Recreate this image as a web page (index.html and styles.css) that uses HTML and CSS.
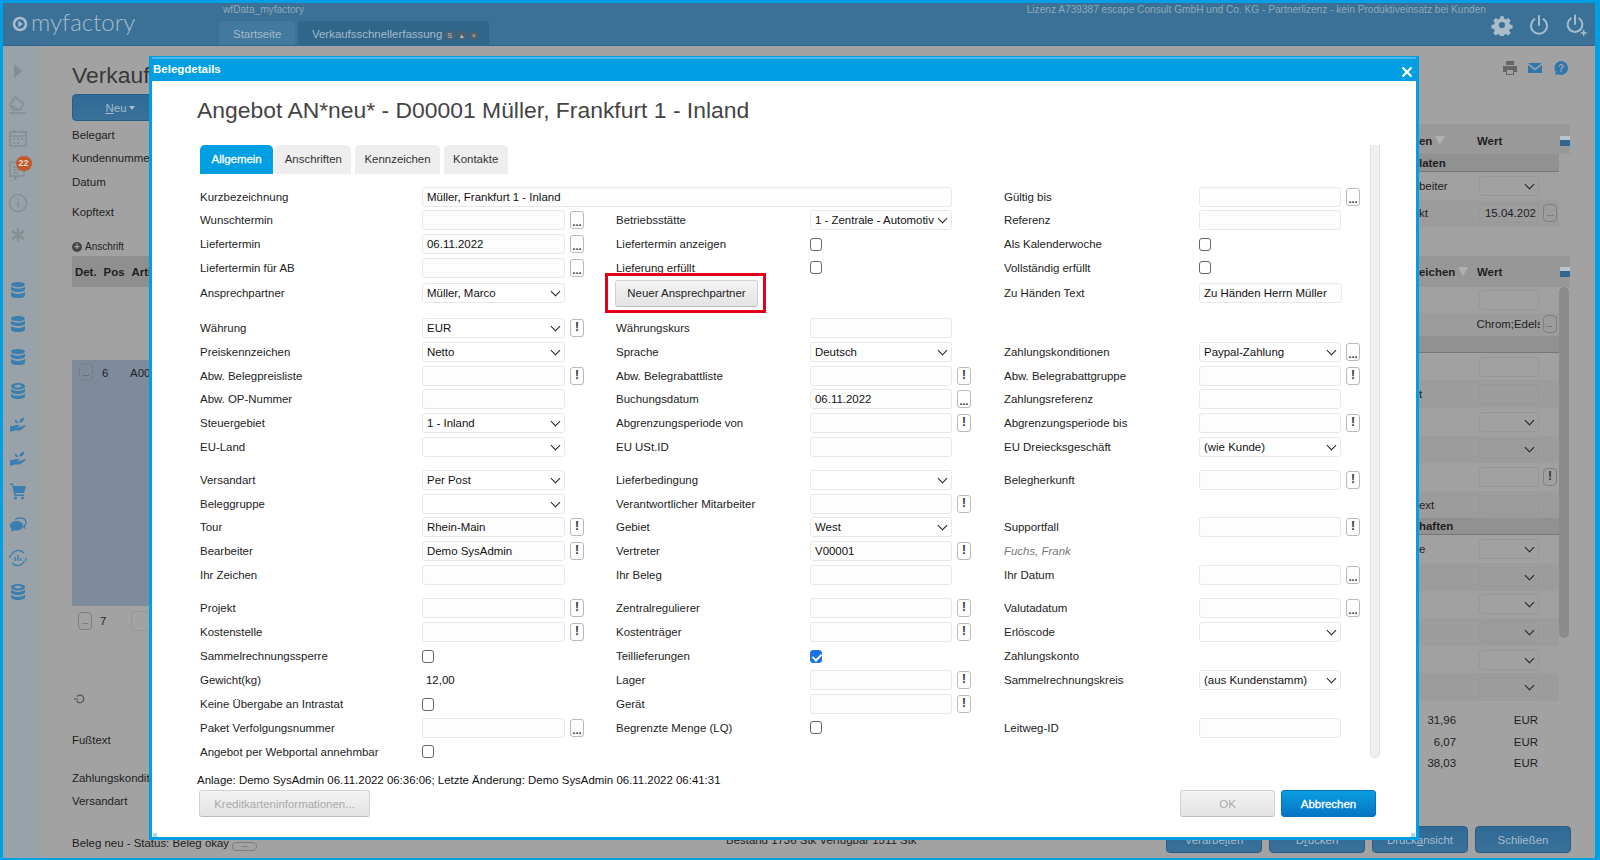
FILE: index.html
```html
<!DOCTYPE html>
<html lang="de">
<head>
    <meta charset="UTF-8">
    <title>myfactory - Belegdetails</title>
    <link rel="stylesheet" href="styles.css">
</head>
<body>
    <svg class="defs" width="0" height="0">
        <symbol id="db" viewBox="0 0 18 18"><path d="M9 1c4 0 7 1 7 2.600S13 6.200 9 6.200 2 5.200 2 3.600 5 1 9 1zM2 5.600c1 1.500 4 2.100 7 2.100s6-.6 7-2.100v3c0 1.500-3 2.500-7 2.500s-7-1-7-2.500zM2 10.800c1 1.500 4 2.100 7 2.100s6-.6 7-2.100v3.600C16 16 13 17 9 17s-7-1-7-2.600z"/></symbol>
        <symbol id="coins" viewBox="0 0 18 18"><path d="M9 1c4 0 7 1.300 7 3.200S13 7.400 9 7.400 2 6.100 2 4.200 5 1 9 1zm0 1.800c-2 0-3.500.6-3.500 1.400S7 5.600 9 5.600s3.500-.6 3.500-1.400S11 2.800 9 2.800zM2 6.600c1 1.600 4 2.300 7 2.300s6-.7 7-2.300v2.600c0 1.500-3 2.700-7 2.700s-7-1.200-7-2.700zM2 11.400c1 1.600 4 2.300 7 2.300s6-.7 7-2.300v2.800C16 15.800 13 17 9 17s-7-1.200-7-2.800z"/></symbol>
        <symbol id="hand" viewBox="0 0 18 18"><path d="M1 11h3l3-1h3c1 0 1 1.600 0 1.600H8v.6h3l4-2c1-.4 2 .7 1 1.500L11 15.500H5L3.500 16.500H1zM9 8.500C7 8 5.500 6.700 5.500 4.500 7.500 4.800 9 6 9 8.500zM10.300 7.800c0-2.800 1.700-4.800 5-5.300 0 3-1.900 5-5 5.300z"/></symbol>
        <symbol id="cart" viewBox="0 0 18 18"><path d="M1 1.500h3l.7 2.500H17l-2 7H6.300l.4 1.500H15V14H5.500L3 3H1z"/><circle cx="6.500" cy="16" r="1.500"/><circle cx="13.500" cy="16" r="1.500"/></symbol>
        <symbol id="chat" viewBox="0 0 18 18"><path d="M7.500 5c3.500 0 6.500 2 6.500 4.800s-3 4.700-6.500 4.700c-.8 0-1.500-.1-2.200-.3L2 16l.9-3C1.700 12.200 1 11.100 1 9.800 1 7 4 5 7.500 5z"/><path d="M6 3.500C7.500 2.300 9.500 2 11 2c3.500 0 6 1.800 6 4.500 0 1.500-.7 2.500-1.800 3.300l.5 2-1.700-1.100" fill="none" stroke="currentColor" stroke-width="1.300"/></symbol>
        <symbol id="chart" viewBox="0 0 18 18"><path d="M2.500 6A7.500 7.500 0 0 1 15 4M15.500 12A7.500 7.500 0 0 1 3 14M1 9a8 8 0 0 1 .5-3M17 9a8 8 0 0 1-.5 3" fill="none" stroke="currentColor" stroke-width="1.400"/><path d="M5.500 8h1.300v4H5.500zM8.300 6h1.300v6H8.300zM11.100 9h1.300v3h-1.300z"/></symbol>
    </svg>

    <div class="screen">
        <header class="topbar">
            <div class="logo">
                <svg class="logo-mark" viewBox="0 0 16 16"><circle cx="8" cy="8" r="6" fill="none" stroke="currentColor" stroke-width="2.600"/><path d="M6.300 4.800 11 8l-4.700 3.200z" fill="currentColor"/></svg>
                <span>myfactory</span>
            </div>
            <div class="topnav">
                <div class="db-name">wfData_myfactory</div>
                <div class="toptabs">
                    <div class="toptab first">Startseite</div>
                    <div class="toptab current">Verkaufsschnellerfassung<span class="tabdots"><span class="tabdot">S</span><span class="tabdot">▴</span><span class="tabdot">×</span></span></div>
                </div>
            </div>
            <div class="licence">Lizenz A739387 escape Consult GmbH und Co. KG - Partnerlizenz - kein Produktiveinsatz bei Kunden</div>
            <div class="topicons">
                <svg viewBox="0 0 22 22"><path fill="currentColor" fill-rule="evenodd" d="M9 1h4l.6 3 1.900.8 2.600-1.700 2.800 2.800-1.700 2.600.8 1.900 3 .6v4l-3 .6-.8 1.900 1.700 2.600-2.800 2.800-2.600-1.700-1.900.8-.6 3H9l-.6-3-1.900-.8-2.600 1.700-2.800-2.800 1.700-2.600-.8-1.900-3-.6v-4l3-.6.8-1.900L1.100 5.900l2.800-2.800 2.600 1.700 1.900-.8zm2 6.500a3.500 3.500 0 1 0 0 7 3.500 3.500 0 0 0 0-7z" transform="translate(1.300 1.300) scale(.88)"/></svg>
                <svg viewBox="0 0 22 22"><path fill="none" stroke="currentColor" stroke-width="2" stroke-linecap="round" d="M11 2v9M6.500 5.200a8 8 0 1 0 9 0"/></svg>
                <svg viewBox="0 0 22 22"><path fill="none" stroke="currentColor" stroke-width="2" stroke-linecap="round" d="M10 1.500v8.500M5.800 4.500a7.400 7.400 0 1 0 8.400 0"/><path fill="currentColor" d="M18 16h1.500v2.200h2.200v1.500h-2.200V22H18v-2.300h-2.200v-1.500H18z"/></svg>
            </div>
        </header>

        <div class="workspace">
            <nav class="sidebar">
                <svg class="nav-arrow" viewBox="0 0 10 14"><path d="M1 0l8 7-8 7z"/></svg>
                <svg class="nav-grey" viewBox="0 0 20 20"><path fill="none" stroke="currentColor" stroke-width="1.600" d="M7 2l9 7-4 6H5L2 10zM2 10l9 5M1 18h18"/></svg>
                <svg class="nav-grey" viewBox="0 0 20 20"><path fill="none" stroke="currentColor" stroke-width="1.600" d="M2 4h16v14H2zM2 8h16M6 1.500V5M14 1.500V5"/><path fill="currentColor" d="M5 10h2v2H5zM9 10h2v2H9zM13 10h2v2h-2zM5 14h2v2H5zM9 14h2v2H9z"/></svg>
                <div class="nav-doc">
                    <svg class="nav-grey" viewBox="0 0 20 20"><path fill="none" stroke="currentColor" stroke-width="1.600" d="M2 2h14v14H9l-2 3v-3H2zM5 7h7M5 10h7M5 13h5"/></svg>
                    <span class="badge">22</span>
                </div>
                <svg class="nav-grey" viewBox="0 0 20 20"><circle cx="10" cy="10" r="8.500" fill="none" stroke="currentColor" stroke-width="1.600"/><path fill="currentColor" d="M9.200 5.500h1.600v1.800H9.200zM9.200 8.800h1.600v6H9.200z"/></svg>
                <svg class="nav-grey nav-last" viewBox="0 0 20 20"><path fill="none" stroke="currentColor" stroke-width="2.200" d="M10 3v14M4 6l12 8M16 6L4 14"/></svg>
                <svg class="nav-blue"><use href="#db"/></svg>
                <svg class="nav-blue"><use href="#db"/></svg>
                <svg class="nav-blue"><use href="#db"/></svg>
                <svg class="nav-blue"><use href="#coins"/></svg>
                <svg class="nav-blue"><use href="#hand"/></svg>
                <svg class="nav-blue"><use href="#hand"/></svg>
                <svg class="nav-blue"><use href="#cart"/></svg>
                <svg class="nav-blue"><use href="#chat"/></svg>
                <svg class="nav-blue"><use href="#chart"/></svg>
                <svg class="nav-blue"><use href="#coins"/></svg>
            </nav>

            <main class="content">
                <div class="panes">
                    <section class="leftpane">
                        <h1 class="page-title">Verkauf</h1>
                        <button class="btn-dark neu" type="button"><u>N</u>eu<span class="caret"></span></button>
                        <div class="bg-label l-belegart">Belegart</div>
                        <div class="bg-label l-kunde">Kundennummer</div>
                        <div class="bg-label l-datum">Datum</div>
                        <div class="bg-label l-kopf">Kopftext</div>
                        <div class="bg-label l-anschrift"><span class="plus">+</span>Anschrift</div>
                        <div class="grid-head"><span>Det.</span><span>Pos</span><span>Artikel</span></div>
                        <div class="grid-sel"><span class="mini-btn">...</span><span class="pos">6</span><span>A0001</span></div>
                        <div class="grid-row"><span class="mini-btn">...</span><span class="pos">7</span><span class="bg-input"></span></div>
                        <svg class="undo" viewBox="0 0 12 12"><path fill="none" stroke="currentColor" stroke-width="1.200" d="M3 3.500a3.800 3.800 0 1 1-.5 4M0 6h4"/></svg>
                        <div class="bg-label l-fuss">Fußtext</div>
                        <div class="bg-label l-zahl">Zahlungskonditionen</div>
                        <div class="bg-label l-vers">Versandart</div>
                    </section>

                    <section class="rightpane">
                        <div class="tools">
                            <svg class="tool-grey" viewBox="0 0 16 16"><path fill="currentColor" d="M4 1h8v4H4zM1 6h14v6h-3v3H4v-3H1zm4 4v4h6v-4z"/></svg>
                            <svg viewBox="0 0 16 16"><path fill="currentColor" d="M1 3h14L8 8.500zM1 5l7 5.500L15 5v8H1z"/></svg>
                            <svg viewBox="0 0 16 16"><path fill="currentColor" d="M8 1a7 7 0 0 1 0 14c-1 0-2-.2-3-.7L2 15l.8-3A7 7 0 0 1 8 1z"/><text x="8" y="11.500" text-anchor="middle" class="tool-q">?</text></svg>
                        </div>

                        <div class="r-head first"><span class="r-name">en<span class="filter"></span></span><b>Wert</b><span class="r-icon"></span></div>
                        <div class="r-band">laten</div>
                        <div class="r-row"><span class="r-name">beiter</span><span class="bg-input sel"></span></div>
                        <div class="r-row alt"><span class="r-name">kt</span><span class="bg-input">15.04.202</span><span class="mini-btn">...</span></div>

                        <div class="r-head second"><span class="r-name">eichen<span class="filter"></span></span><b>Wert</b><span class="r-icon"></span></div>
                        <div class="r-body">
                            <div class="r-rows">
                                <div class="r-row top"><span class="r-name"></span><span class="bg-input"></span></div>
                                <div class="r-row alt short"><span class="r-name"></span><span class="r-value">Chrom;Edels</span><span class="mini-btn">...</span></div>
                                <div class="r-band"></div>
                                <div class="r-row"><span class="r-name"></span><span class="bg-input"></span></div>
                                <div class="r-row alt"><span class="r-name">t</span><span class="bg-input"></span></div>
                                <div class="r-row"><span class="r-name"></span><span class="bg-input sel"></span></div>
                                <div class="r-row alt"><span class="r-name"></span><span class="bg-input sel"></span></div>
                                <div class="r-row"><span class="r-name"></span><span class="bg-input"></span><span class="mini-btn strong">!</span></div>
                                <div class="r-row alt"><span class="r-name">ext</span><span class="bg-input"></span></div>
                                <div class="r-band">haften</div>
                                <div class="r-row"><span class="r-name">e</span><span class="bg-input sel"></span></div>
                                <div class="r-row alt"><span class="r-name"></span><span class="bg-input sel"></span></div>
                                <div class="r-row"><span class="r-name"></span><span class="bg-input sel"></span></div>
                                <div class="r-row alt"><span class="r-name"></span><span class="bg-input sel"></span></div>
                                <div class="r-row"><span class="r-name"></span><span class="bg-input sel"></span></div>
                                <div class="r-row alt"><span class="r-name"></span><span class="bg-input sel"></span></div>
                            </div>
                            <div class="r-scroll"></div>
                        </div>

                        <div class="totals">
                            <span>31,96</span><span>EUR</span>
                            <span>6,07</span><span>EUR</span>
                            <span>38,03</span><span>EUR</span>
                        </div>
                    </section>
                </div>

                <footer class="statusbar">
                    <div class="status">Beleg neu - Status: Beleg okay <span class="mini-btn wide">...</span></div>
                    <div class="stock">Bestand 1736 Stk Verfügbar 1511 Stk</div>
                    <div class="actions">
                        <button class="btn-dark" type="button">Verarbe<u>i</u>ten</button>
                        <button class="btn-dark" type="button">D<u>r</u>ucken</button>
                        <button class="btn-dark" type="button">Druck<u>a</u>nsicht</button>
                        <button class="btn-dark" type="button">Schließen</button>
                    </div>
                </footer>
            </main>
        </div>
    </div>

    <div class="dialog">
        <div class="dialog-bar">
            <span>Belegdetails</span>
            <svg class="dialog-close" viewBox="0 0 12 12"><path d="M1.500 1.500l9 9M10.500 1.500l-9 9" stroke="#fff" stroke-width="2.200"/></svg>
        </div>
        <div class="dialog-body">
            <h2 class="dialog-title">Angebot AN*neu* - D00001 Müller, Frankfurt 1 - Inland</h2>

            <div class="scroll-area">
                <div class="form-wrap">
                    <div class="tabs">
                        <div class="tab active">Allgemein</div>
                        <div class="tab">Anschriften</div>
                        <div class="tab">Kennzeichen</div>
                        <div class="tab">Kontakte</div>
                    </div>

                    <div class="form-group g1">
                        <div class="row">
                            <label>Kurzbezeichnung</label>
                            <div class="cell span3"><div class="fld wide">Müller, Frankfurt 1 - Inland</div></div>
                            <label>Gültig bis</label>
                            <div class="cell"><div class="fld"></div><span class="sq">...</span></div>
                        </div>
                        <div class="row">
                            <label>Wunschtermin</label>
                            <div class="cell"><div class="fld"></div><span class="sq">...</span></div>
                            <label>Betriebsstätte</label>
                            <div class="cell"><div class="fld sel">1 - Zentrale - Automotiv</div></div>
                            <label>Referenz</label>
                            <div class="cell"><div class="fld"></div></div>
                        </div>
                        <div class="row">
                            <label>Liefertermin</label>
                            <div class="cell"><div class="fld">06.11.2022</div><span class="sq">...</span></div>
                            <label>Liefertermin anzeigen</label>
                            <div class="cell"><span class="check"></span></div>
                            <label>Als Kalenderwoche</label>
                            <div class="cell"><span class="check"></span></div>
                        </div>
                        <div class="row">
                            <label>Liefertermin für AB</label>
                            <div class="cell"><div class="fld"></div><span class="sq">...</span></div>
                            <label>Lieferung erfüllt</label>
                            <div class="cell"><span class="check"></span></div>
                            <label>Vollständig erfüllt</label>
                            <div class="cell"><span class="check"></span></div>
                        </div>
                        <div class="row contact">
                            <label>Ansprechpartner</label>
                            <div class="cell"><div class="fld sel">Müller, Marco</div></div>
                            <div class="cell span2">
                                <button class="btn-grey new-contact" type="button">Neuer Ansprechpartner<span class="red-box"></span></button>
                            </div>
                            <label>Zu Händen Text</label>
                            <div class="cell"><div class="fld">Zu Händen Herrn Müller</div></div>
                        </div>
                    </div>

                    <div class="form-group g2">
                        <div class="row">
                            <label>Währung</label>
                            <div class="cell"><div class="fld sel">EUR</div><span class="sq bang">!</span></div>
                            <label>Währungskurs</label>
                            <div class="cell"><div class="fld"></div></div>
                        </div>
                        <div class="row">
                            <label>Preiskennzeichen</label>
                            <div class="cell"><div class="fld sel">Netto</div></div>
                            <label>Sprache</label>
                            <div class="cell"><div class="fld sel">Deutsch</div></div>
                            <label>Zahlungskonditionen</label>
                            <div class="cell"><div class="fld sel">Paypal-Zahlung</div><span class="sq">...</span></div>
                        </div>
                        <div class="row">
                            <label>Abw. Belegpreisliste</label>
                            <div class="cell"><div class="fld"></div><span class="sq bang">!</span></div>
                            <label>Abw. Belegrabattliste</label>
                            <div class="cell"><div class="fld"></div><span class="sq bang">!</span></div>
                            <label>Abw. Belegrabattgruppe</label>
                            <div class="cell"><div class="fld"></div><span class="sq bang">!</span></div>
                        </div>
                        <div class="row">
                            <label>Abw. OP-Nummer</label>
                            <div class="cell"><div class="fld"></div></div>
                            <label>Buchungsdatum</label>
                            <div class="cell"><div class="fld">06.11.2022</div><span class="sq">...</span></div>
                            <label>Zahlungsreferenz</label>
                            <div class="cell"><div class="fld"></div></div>
                        </div>
                        <div class="row">
                            <label>Steuergebiet</label>
                            <div class="cell"><div class="fld sel">1 - Inland</div></div>
                            <label>Abgrenzungsperiode von</label>
                            <div class="cell"><div class="fld"></div><span class="sq bang">!</span></div>
                            <label>Abgrenzungsperiode bis</label>
                            <div class="cell"><div class="fld"></div><span class="sq bang">!</span></div>
                        </div>
                        <div class="row">
                            <label>EU-Land</label>
                            <div class="cell"><div class="fld sel"></div></div>
                            <label>EU USt.ID</label>
                            <div class="cell"><div class="fld"></div></div>
                            <label>EU Dreiecksgeschäft</label>
                            <div class="cell"><div class="fld sel">(wie Kunde)</div></div>
                        </div>
                    </div>

                    <div class="form-group g3">
                        <div class="row">
                            <label>Versandart</label>
                            <div class="cell"><div class="fld sel">Per Post</div></div>
                            <label>Lieferbedingung</label>
                            <div class="cell"><div class="fld sel"></div></div>
                            <label>Belegherkunft</label>
                            <div class="cell"><div class="fld"></div><span class="sq bang">!</span></div>
                        </div>
                        <div class="row">
                            <label>Beleggruppe</label>
                            <div class="cell"><div class="fld sel"></div></div>
                            <label>Verantwortlicher Mitarbeiter</label>
                            <div class="cell"><div class="fld"></div><span class="sq bang">!</span></div>
                        </div>
                        <div class="row">
                            <label>Tour</label>
                            <div class="cell"><div class="fld">Rhein-Main</div><span class="sq bang">!</span></div>
                            <label>Gebiet</label>
                            <div class="cell"><div class="fld sel">West</div></div>
                            <label>Supportfall</label>
                            <div class="cell"><div class="fld"></div><span class="sq bang">!</span></div>
                        </div>
                        <div class="row">
                            <label>Bearbeiter</label>
                            <div class="cell"><div class="fld">Demo SysAdmin</div><span class="sq bang">!</span></div>
                            <label>Vertreter</label>
                            <div class="cell"><div class="fld">V00001</div><span class="sq bang">!</span></div>
                            <label class="hint">Fuchs, Frank</label>
                        </div>
                        <div class="row">
                            <label>Ihr Zeichen</label>
                            <div class="cell"><div class="fld"></div></div>
                            <label>Ihr Beleg</label>
                            <div class="cell"><div class="fld"></div></div>
                            <label>Ihr Datum</label>
                            <div class="cell"><div class="fld"></div><span class="sq">...</span></div>
                        </div>
                    </div>

                    <div class="form-group g4">
                        <div class="row">
                            <label>Projekt</label>
                            <div class="cell"><div class="fld"></div><span class="sq bang">!</span></div>
                            <label>Zentralregulierer</label>
                            <div class="cell"><div class="fld"></div><span class="sq bang">!</span></div>
                            <label>Valutadatum</label>
                            <div class="cell"><div class="fld"></div><span class="sq">...</span></div>
                        </div>
                        <div class="row">
                            <label>Kostenstelle</label>
                            <div class="cell"><div class="fld"></div><span class="sq bang">!</span></div>
                            <label>Kostenträger</label>
                            <div class="cell"><div class="fld"></div><span class="sq bang">!</span></div>
                            <label>Erlöscode</label>
                            <div class="cell"><div class="fld sel"></div></div>
                        </div>
                        <div class="row">
                            <label>Sammelrechnungssperre</label>
                            <div class="cell"><span class="check"></span></div>
                            <label>Teillieferungen</label>
                            <div class="cell"><span class="check on"></span></div>
                            <label>Zahlungskonto</label>
                        </div>
                        <div class="row">
                            <label>Gewicht(kg)</label>
                            <div class="cell"><span class="plain">12,00</span></div>
                            <label>Lager</label>
                            <div class="cell"><div class="fld"></div><span class="sq bang">!</span></div>
                            <label>Sammelrechnungskreis</label>
                            <div class="cell"><div class="fld sel">(aus Kundenstamm)</div></div>
                        </div>
                        <div class="row">
                            <label>Keine Übergabe an Intrastat</label>
                            <div class="cell"><span class="check"></span></div>
                            <label>Gerät</label>
                            <div class="cell"><div class="fld"></div><span class="sq bang">!</span></div>
                        </div>
                        <div class="row">
                            <label>Paket Verfolgungsnummer</label>
                            <div class="cell"><div class="fld"></div><span class="sq">...</span></div>
                            <label>Begrenzte Menge (LQ)</label>
                            <div class="cell"><span class="check"></span></div>
                            <label>Leitweg-ID</label>
                            <div class="cell"><div class="fld"></div></div>
                        </div>
                        <div class="row">
                            <label>Angebot per Webportal annehmbar</label>
                            <div class="cell"><span class="check"></span></div>
                        </div>
                    </div>
                </div>
                <div class="scroll-track"></div>
            </div>

            <div class="created">Anlage: Demo SysAdmin 06.11.2022 06:36:06; Letzte Änderung: Demo SysAdmin 06.11.2022 06:41:31</div>
            <div class="dialog-buttons">
                <button class="btn-grey disabled card-btn" type="button">Kreditkarteninformationen...</button>
                <div class="dialog-actions">
                    <button class="btn-grey disabled" type="button">OK</button>
                    <button class="btn-blue" type="button">Abbrechen</button>
                </div>
            </div>
        </div>
        <span class="grip left"></span>
        <span class="grip right"></span>
    </div>
</body>
</html>
```

FILE: styles.css
```css
* {
    box-sizing: border-box;
}
html, body {
    margin: 0;
    padding: 0;
    height: 100%;
    overflow: hidden;
}
body {
    font-family: "Liberation Sans", Arial, sans-serif;
    font-size: 11.45px;
    color: #1e1e1e;
}
button {
    font-family: inherit;
    font-size: 11.45px;
}
.defs {
    position: absolute;
}

/* background page, already dimmed */
.screen {
    width: 1600px;
    height: 860px;
    display: flex;
    flex-direction: column;
    border-style: solid;
    border-color: #009fe3;
    border-width: 3px 5px 2px 3px;
    background: #a2a2a2;
}
.topbar {
    height: 43px;
    flex: none;
    display: flex;
    background: #3b7196;
    border-bottom: 1px solid #33668a;
    color: #a4bac8;
}
.logo {
    width: 216px;
    flex: none;
    display: flex;
    align-items: center;
    gap: 3px;
    padding: 0 0 6px 9px;
    font-family: "Lato", sans-serif;
    font-weight: 300;
    font-size: 24px;
    color: #a8bcc9;
}
.logo-mark {
    width: 16px;
    height: 16px;
    margin-top: 6px;
}
.topnav {
    width: 806px;
    flex: none;
    display: flex;
    flex-direction: column;
}
.db-name {
    height: 19px;
    padding: 1px 4px 0;
    font-size: 10.15px;
    line-height: 12px;
    color: #8fa8b8;
}
.toptabs {
    display: flex;
    gap: 3px;
}
.toptab {
    height: 24px;
    padding: 0 14px;
    line-height: 27px;
    white-space: nowrap;
    background: #41799f;
    border-radius: 4px 4px 0 0;
}
.toptab.first {
    width: 76px;
    padding: 0 0 0 14px;
}
.toptab.current {
    width: 191px;
    background: #31668b;
}
.tabdots {
    margin-left: 3px;
}
.tabdot {
    display: inline-block;
    width: 9px;
    height: 9px;
    margin-right: 3px;
    border-radius: 50%;
    background: #50616d;
    color: #b5c4ce;
    font-size: 7px;
    line-height: 9px;
    text-align: center;
}
.licence {
    width: 461px;
    flex: none;
    padding-top: 1px;
    font-size: 10.15px;
    line-height: 12px;
    white-space: nowrap;
    text-align: right;
    color: #8fa8b8;
}
.topicons {
    flex: 1;
    display: flex;
    justify-content: flex-end;
    align-items: center;
    gap: 15px;
    padding: 1px 8px 0 0;
    color: #a8bcc9;
}
.topicons svg {
    width: 22px;
    height: 22px;
}

.workspace {
    flex: 1;
    display: flex;
    min-height: 0;
}
.sidebar {
    width: 38px;
    flex: none;
    display: flex;
    flex-direction: column;
    align-items: center;
    padding: 18px 9px 0 0;
    background: #99a2a8;
}
.sidebar svg {
    display: block;
}
.nav-arrow {
    width: 10px;
    height: 14px;
    fill: #858e94;
    margin-bottom: 17px;
}
.nav-grey {
    width: 20px;
    height: 20px;
    color: #868e93;
    margin-bottom: 12.500px;
}
.nav-doc {
    position: relative;
}
.nav-last {
    margin-bottom: 36px;
}
.badge {
    position: absolute;
    left: 8px;
    top: -4px;
    width: 16px;
    height: 15px;
    border-radius: 8px;
    background: #c05a2a;
    color: #e6d8cf;
    font-size: 9px;
    font-weight: bold;
    line-height: 15px;
    text-align: center;
}
.nav-blue {
    width: 18px;
    height: 18px;
    margin-bottom: 15.500px;
    fill: #3a7fb0;
    color: #3a7fb0;
}

.content {
    flex: 1;
    min-width: 0;
    display: flex;
    flex-direction: column;
}
.panes {
    flex: 1;
    min-height: 0;
    display: flex;
}
.leftpane {
    flex: 1;
    min-width: 0;
    padding-left: 31px;
}
.page-title {
    margin: 15px 0 0;
    height: 28px;
    font-size: 22.900px;
    line-height: 28px;
    font-weight: normal;
    color: #383838;
}
.btn-dark {
    width: 96px;
    height: 27px;
    padding: 0;
    border: 1px solid #2a5d82;
    border-radius: 4px;
    background: linear-gradient(#2f6a96, #3a7199);
    color: #a6bccb;
}
.neu {
    display: block;
    margin-top: 5px;
}
.caret {
    display: inline-block;
    margin-left: 2px;
    border: 3px solid transparent;
    border-top: 4px solid #a6bccb;
    border-bottom: 0;
    vertical-align: 2px;
}
.bg-label {
    height: 14px;
    line-height: 14px;
}
.l-belegart { margin-top: 7px; }
.l-kunde { margin-top: 9px; }
.l-datum { margin-top: 10px; }
.l-kopf { margin-top: 16px; }
.l-anschrift {
    margin-top: 21px;
    font-size: 10px;
}
.plus {
    display: inline-block;
    width: 10px;
    height: 10px;
    margin-right: 3px;
    border-radius: 50%;
    background: #444;
    color: #a2a2a2;
    font-size: 10px;
    font-weight: bold;
    line-height: 10px;
    text-align: center;
}
.grid-head {
    height: 31px;
    margin-top: 2px;
    padding: 1px 0 0 3px;
    display: flex;
    gap: 7px;
    align-items: center;
    background: #8f8f8f;
    font-weight: bold;
}
.grid-sel {
    height: 246px;
    margin-top: 73px;
    padding: 3px 0 0 7px;
    display: flex;
    gap: 9px;
    background: #7e8b9d;
}
.grid-sel .pos {
    width: 19px;
}
.grid-sel span {
    line-height: 20px;
}
.grid-row {
    height: 21px;
    margin-top: 4px;
    padding-left: 6px;
    display: flex;
    align-items: center;
    gap: 8px;
}
.grid-row .pos {
    width: 23px;
}
.mini-btn {
    display: inline-block;
    flex: none;
    width: 14px;
    height: 18px;
    border: 1px solid #7e7e7e;
    border-radius: 4px;
    font-size: 8px;
    line-height: 18px;
    text-align: center;
    color: #333;
}
.mini-btn.strong {
    font-size: 12px;
    font-weight: bold;
    line-height: 15px;
}
.mini-btn.wide {
    width: 25px;
    height: 9px;
    line-height: 3px;
}
.bg-input {
    display: block;
    flex: none;
    width: 60px;
    height: 20px;
    padding-left: 5px;
    overflow: hidden;
    white-space: nowrap;
    line-height: 19px;
    border: 1px solid #979797;
    border-radius: 3px;
    position: relative;
}
.sel::after {
    content: "";
    position: absolute;
    right: 5px;
    top: 50%;
    width: 6px;
    height: 6px;
    margin-top: -5px;
    border-right: 1.500px solid #222;
    border-bottom: 1.500px solid #222;
    transform: rotate(45deg);
}
.undo {
    display: block;
    width: 12px;
    height: 12px;
    margin: 62px 0 0 2px;
    color: #555;
}
.l-fuss { margin-top: 28px; }
.l-zahl { margin-top: 24px; }
.l-vers { margin-top: 9px; }

.rightpane {
    width: 176px;
    flex: none;
}
.tools {
    height: 78px;
    padding: 14px 26px 0 0;
    display: flex;
    justify-content: flex-end;
    align-items: flex-start;
    gap: 10px;
    color: #2f78ae;
}
.tools svg {
    width: 16px;
    height: 16px;
}
.tools .tool-grey {
    color: #666;
    margin-right: -1px;
}
.tool-q {
    font-size: 10px;
    font-weight: bold;
    fill: #a2a2a2;
}
.r-head {
    width: 151px;
    height: 30px;
    padding-top: 3px;
    display: flex;
    align-items: center;
    background: #999;
}
.r-head.second {
    margin-top: 28.600px;
    height: 31px;
    padding-top: 2px;
    background: #979797;
}
.r-head b {
    width: 84px;
    margin-left: 2px;
}
.r-head .r-name {
    font-weight: bold;
    white-space: nowrap;
}
.filter {
    display: inline-block;
    margin-left: 3px;
    border: 5px solid transparent;
    border-top: 9px solid #b0b0b0;
    border-bottom: 0;
}
.r-icon {
    width: 10px;
    height: 10px;
    background: linear-gradient(#b9c4cc 40%, #2f6790 40%);
}
.r-band {
    width: 140px;
    height: 17px;
    line-height: 16px;
    font-weight: bold;
    background: #919191;
    border-bottom: 1px solid #777;
}
.r-head.first + .r-band {
    height: 18px;
    line-height: 18px;
}
.r-row {
    width: 140px;
    height: 27.600px;
    display: flex;
    align-items: center;
    gap: 4px;
    background: #a1a1a1;
}
.r-row.alt {
    background: #9c9c9c;
}
.r-row.top {
    height: 26px;
}
.r-row.short {
    height: 23px;
}
.r-name {
    width: 56px;
    flex: none;
}
.r-value {
    width: 63px;
    margin-left: -2.500px;
    overflow: hidden;
    white-space: nowrap;
}
.r-value + .mini-btn {
    margin-left: -1px;
}
.r-row .bg-input {
    height: 20px;
}
.r-body {
    display: flex;
}
.r-rows {
    width: 140px;
    flex: none;
}
.r-scroll {
    width: 10px;
    height: 351px;
    background: #8b8b8b;
    border-radius: 5px;
}
.totals {
    display: grid;
    grid-template-columns: 37px 82px;
    grid-auto-rows: 21.500px;
    margin-top: 8.500px;
    align-items: center;
}
.totals span {
    text-align: right;
}

.statusbar {
    height: 32px;
    flex: none;
    display: flex;
    padding-left: 31px;
}
.status {
    width: 654px;
    flex: none;
    padding-top: 10px;
    line-height: 14px;
}
.stock {
    width: 440px;
    flex: none;
    padding-top: 7px;
    line-height: 14px;
}
.actions {
    display: flex;
    gap: 7px;
    margin-left: auto;
    padding: 0 26px 0 0;
}

/* dialog on top of the page */
.dialog {
    position: absolute;
    left: 149px;
    top: 56px;
    width: 1270px;
    height: 784px;
    display: flex;
    flex-direction: column;
    border: 3px solid #009fe3;
    border-top-width: 1px;
    background: #fff;
    color: #222;
}
.dialog-bar {
    height: 22px;
    flex: none;
    display: flex;
    align-items: center;
    justify-content: space-between;
    margin-top: 2px;
    padding: 0 3px 2px 1px;
    background: #009fe3;
    box-shadow: 0 -2px 0 #4bb9ea;
    color: #fff;
    font-size: 11.500px;
    font-weight: bold;
}
.dialog-close {
    width: 12px;
    height: 12px;
    margin: 5px 0 0 0;
}
.dialog-body {
    flex: 1;
    padding: 0 0 0 45px;
}
.dialog-title {
    margin: 15px 0 0;
    height: 29px;
    font-size: 22.900px;
    line-height: 29px;
    font-weight: normal;
    color: #444;
}
.scroll-area {
    display: flex;
    width: 1180px;
    height: 613px;
    margin: 20px 0 0 3px;
}
.form-wrap {
    width: 1170px;
    flex: none;
}
.scroll-track {
    width: 10px;
    height: 613px;
    background: #efefef;
    border: 1px solid #e0e0e0;
    border-top: 0;
    border-radius: 0 0 5px 5px;
}
.tabs {
    display: flex;
    gap: 3.500px;
    height: 29px;
}
.tab {
    padding: 0 9.500px;
    line-height: 29px;
    background: #eeeeee;
    border-radius: 5px 5px 0 0;
    color: #333;
}
.tab.active {
    padding: 0 11.500px;
    margin-right: -1.500px;
    background: #009fe3;
    color: #fff;
    -webkit-text-stroke: .3px #fff;
}
.form-group.g1 {
    margin-top: 10.800px;
}
.form-group.g2 {
    margin-top: 9.500px;
}
.form-group.g3 {
    margin-top: 8.850px;
}
.form-group.g4 {
    margin-top: 9px;
}
.row {
    display: grid;
    grid-template-columns: 222px 194px 194px 194px 195px 1fr;
    align-items: center;
    height: 23.750px;
}
.g2 .row {
    height: 23.750px;
}
.g3 .row, .g4 .row {
    height: 23.950px;
}
.row.contact {
    height: 27px;
}
.row label {
    white-space: nowrap;
}
.row label.hint {
    font-style: italic;
    color: #777;
}
.cell {
    display: flex;
    align-items: center;
    gap: 5px;
    min-height: 20px;
}
.cell.span2 {
    grid-column: span 2;
}
.cell.span3 {
    grid-column: span 3;
}
.fld {
    position: relative;
    width: 143px;
    height: 20px;
    flex: none;
    padding-left: 4px;
    overflow: hidden;
    white-space: nowrap;
    line-height: 19px;
    border: 1px solid #e8e8e8;
    border-radius: 3px;
    background: #fdfdfd;
    color: #111;
}
.cell:nth-child(4) .fld, .cell:nth-child(6) .fld {
    width: 142px;
}
.fld.wide {
    width: 530px;
}
.fld.sel {
    background: #fff;
}
.sq {
    width: 14px;
    height: 18px;
    flex: none;
    border: 1px solid #b9b9b9;
    border-radius: 3px;
    text-align: center;
    font-size: 11px;
    font-weight: bold;
    line-height: 20px;
    color: #333;
}
.sq.bang {
    line-height: 15px;
    font-size: 12px;
}
.check {
    position: relative;
    width: 12px;
    height: 13px;
    flex: none;
    border: 1px solid #666;
    border-radius: 3px;
    background: #fff;
}
.check.on {
    border-color: #1b72e2;
    background: #1b72e2;
}
.check.on::after {
    content: "";
    position: absolute;
    left: 3px;
    top: 1px;
    width: 4px;
    height: 7px;
    border-right: 2px solid #fff;
    border-bottom: 2px solid #fff;
    transform: rotate(45deg);
}
.plain {
    padding-left: 4px;
    color: #111;
}
.btn-grey {
    height: 27px;
    padding: 0;
    border: 1px solid #d2d2d2;
    border-bottom-color: #bcbcbc;
    border-radius: 3px;
    background: linear-gradient(#f4f4f4, #e3e3e3);
    color: #222;
}
.new-contact {
    position: relative;
    width: 143px;
    margin-left: -1px;
}
.red-box {
    position: absolute;
    left: -11px;
    top: -8px;
    width: 161px;
    height: 40px;
    border: 3px solid #e2001a;
    pointer-events: none;
}
.created {
    height: 14px;
    margin-top: 15px;
    line-height: 14px;
    color: #111;
}
.dialog-buttons {
    display: flex;
    justify-content: space-between;
    width: 1177px;
    margin: 3px 0 0 2px;
}
.dialog-actions {
    display: flex;
    gap: 6px;
}
.btn-grey.disabled {
    width: 95px;
    color: #a9a9a9;
}
.btn-grey.card-btn {
    width: 171px;
}
.btn-blue {
    width: 95px;
    height: 27px;
    padding: 0;
    border: 1px solid #0670bd;
    border-radius: 3px;
    background: linear-gradient(#0a9ee2, #0674c4);
    color: #fff;
    -webkit-text-stroke: .3px #fff;
}
.grip {
    position: absolute;
    bottom: 0;
    width: 4px;
    height: 4px;
    background: #a5d8f1;
}
.grip.left { left: 1px; }
.grip.right { right: 1px; }
```
